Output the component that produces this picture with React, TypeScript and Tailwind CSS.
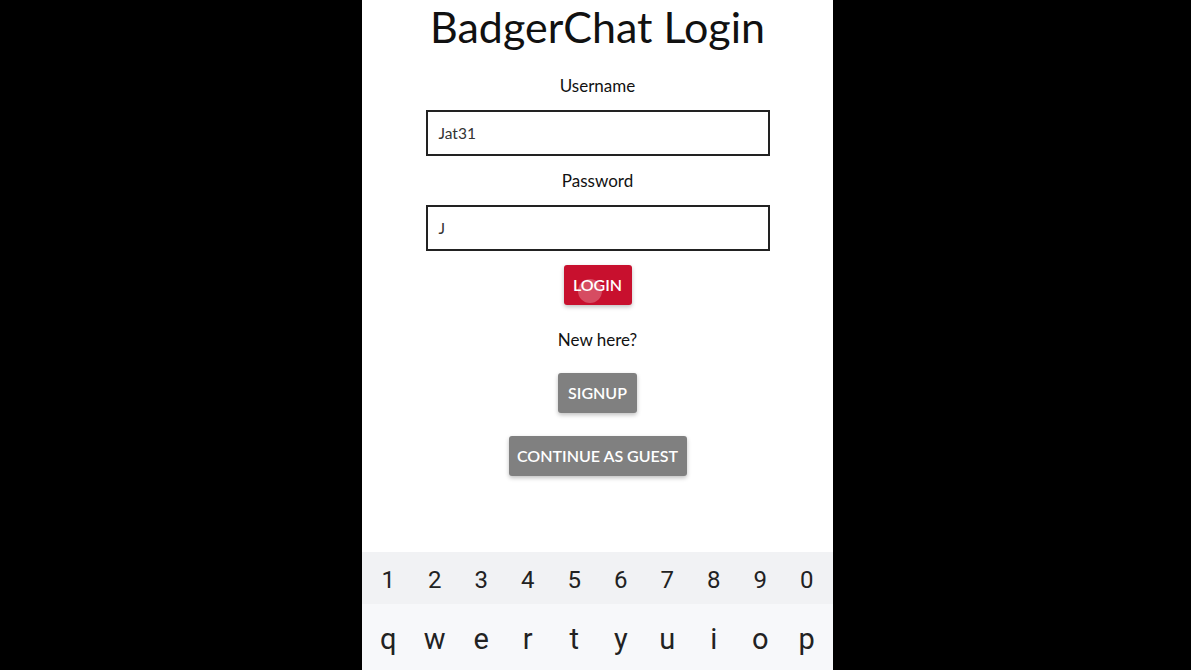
import React from "react";

const digits = ["1", "2", "3", "4", "5", "6", "7", "8", "9", "0"];
const letters = ["q", "w", "e", "r", "t", "y", "u", "i", "o", "p"];

export default function App() {
  return (
    <div className="w-[1191px] h-[670px] bg-black flex pl-[362px] overflow-hidden">
      <div
        className="w-[471px] h-[670px] bg-white flex flex-col"
        style={{ fontFamily: "Lato, 'Open Sans', sans-serif" }}
      >
        <div className="flex-1 flex flex-col items-center">
          <h1 className="text-[43px] leading-[52px] mt-[1px] text-[#111]">
            BadgerChat Login
          </h1>
          <div className="mt-[22px] text-[17px] leading-[22px] text-[#111]">Username</div>
          <div className="mt-[13px] w-[344px] h-[46px] border-2 border-[#222] flex items-center pl-[11px] pt-[2px] text-[15.5px] text-[#333]">
            Jat31
          </div>
          <div className="mt-[14px] text-[17px] leading-[22px] text-[#111]">Password</div>
          <div className="mt-[13px] w-[344px] h-[46px] border-2 border-[#222] flex items-center pl-[11px] pt-[2px] text-[15.5px] text-[#333]">
            J
          </div>
          <div className="mt-[14px] relative w-[68px] h-[40px] rounded-[3px] bg-[#c8102e] shadow-[0_2px_4px_rgba(0,0,0,0.25)] flex items-center justify-center text-white text-[16px] font-semibold overflow-hidden">
            <span className="absolute left-[14px] top-[14px] w-[24px] h-[24px] rounded-full bg-white/25" />
            <span className="relative">LOGIN</span>
          </div>
          <div className="mt-[24px] text-[17px] leading-[22px] text-[#111]">New here?</div>
          <div className="mt-[22px] w-[79px] h-[40px] rounded-[3px] bg-[#808080] shadow-[0_2px_4px_rgba(0,0,0,0.25)] flex items-center justify-center text-white text-[16px] font-semibold">
            SIGNUP
          </div>
          <div className="mt-[23px] w-[178px] h-[40px] rounded-[3px] bg-[#808080] shadow-[0_2px_4px_rgba(0,0,0,0.25)] flex items-center justify-center text-white text-[16px] font-semibold">
            CONTINUE AS GUEST
          </div>
        </div>
        <div style={{ fontFamily: "Roboto, sans-serif" }}>
          <div className="h-[52px] bg-[#f1f2f4] grid grid-cols-10 items-center px-[3px] pt-[4px]">
            {digits.map((d) => (
              <div key={d} className="text-center text-[24px] text-[#222] leading-none">
                {d}
              </div>
            ))}
          </div>
          <div className="h-[66px] bg-[#f7f8fa] grid grid-cols-10 items-start pt-[21px] px-[3px]">
            {letters.map((d) => (
              <div key={d} className="text-center text-[29px] text-[#222] leading-none">
                {d}
              </div>
            ))}
          </div>
        </div>
      </div>
    </div>
  );
}
